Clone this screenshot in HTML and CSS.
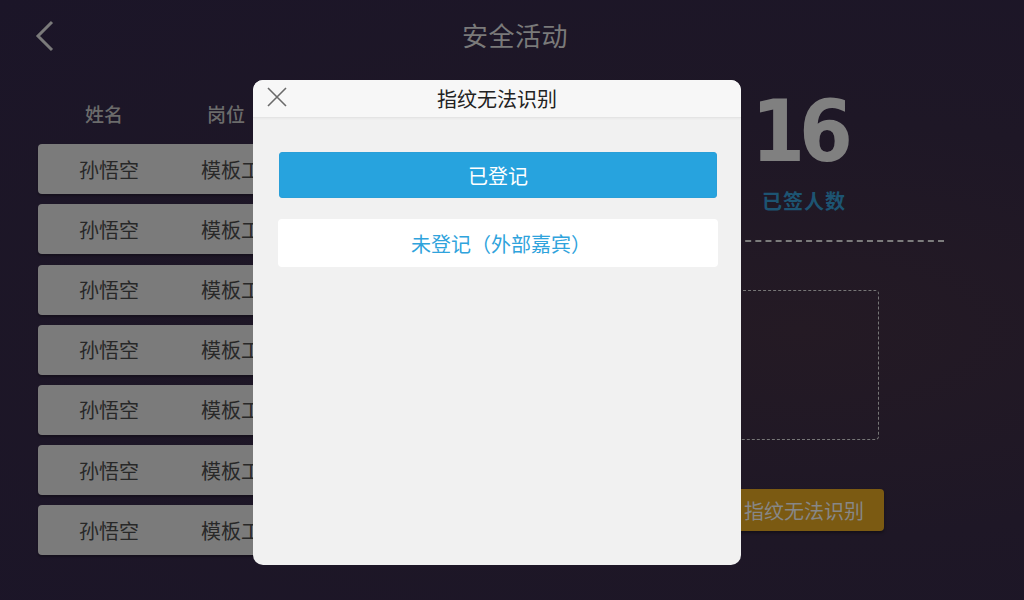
FILE: index.html
```html
<!DOCTYPE html>
<html lang="zh-CN">
<head>
<meta charset="utf-8">
<title>安全活动</title>
<link rel="stylesheet" href="styles.css">
</head>
<body>
<div class="page">
  <header class="topbar">
    <button class="back" aria-label="返回">
      <svg width="20" height="32" viewBox="0 0 20 32"><polyline points="17,2 3,16 17,30" fill="none" stroke="#7a7a7a" stroke-width="3"/></svg>
    </button>
    <h1 class="title">安全活动</h1>
  </header>
  <main class="main">
    <section class="list">
      <div class="list-head">
        <span class="cell">姓名</span>
        <span class="cell">岗位</span>
      </div>
      <div class="row"><span class="cell">孙悟空</span><span class="cell">模板工</span></div>
      <div class="row"><span class="cell">孙悟空</span><span class="cell">模板工</span></div>
      <div class="row"><span class="cell">孙悟空</span><span class="cell">模板工</span></div>
      <div class="row"><span class="cell">孙悟空</span><span class="cell">模板工</span></div>
      <div class="row"><span class="cell">孙悟空</span><span class="cell">模板工</span></div>
      <div class="row"><span class="cell">孙悟空</span><span class="cell">模板工</span></div>
      <div class="row"><span class="cell">孙悟空</span><span class="cell">模板工</span></div>
    </section>
    <aside class="side">
      <div class="count">16</div>
      <div class="count-label">已签人数</div>
      <div class="divider"></div>
      <div class="scan-box"></div>
      <button class="fail-btn">指纹无法识别</button>
    </aside>
  </main>

  <div class="modal">
    <div class="modal-head">
      <button class="close" aria-label="关闭">
        <svg width="20" height="20" viewBox="0 0 20 20"><path d="M1 1 L19 19 M19 1 L1 19" stroke="#6a6a6a" stroke-width="1.6" fill="none"/></svg>
      </button>
      <div class="modal-title">指纹无法识别</div>
    </div>
    <div class="modal-body">
      <button class="btn-primary">已登记</button>
      <button class="btn-plain">未登记（外部嘉宾）</button>
    </div>
  </div>
</div>
</body>
</html>
```

FILE: styles.css
```css
* { box-sizing: border-box; }
html, body { margin: 0; padding: 0; }
body {
  width: 1024px;
  height: 600px;
  overflow: hidden;
  font-family: "Noto Sans CJK SC", "Noto Sans", sans-serif;
}
.page {
  position: relative;
  width: 1024px;
  height: 600px;
  background: radial-gradient(ellipse at 78% 55%, #241a24 0%, #1e1726 45%, #1b1528 100%);
}
.topbar {
  position: relative;
  height: 72px;
  display: flex;
  align-items: center;
  justify-content: center;
}
.back {
  position: absolute;
  left: 35px;
  top: 20px;
  width: 20px;
  height: 32px;
  padding: 0;
  border: 0;
  background: none;
  display: flex;
}
.title {
  margin: 0 0 4px 6px;
  font-size: 26px;
  font-weight: 400;
  color: #7a7a7a;
  letter-spacing: 0.5px;
}
.main {
  display: flex;
  justify-content: space-between;
  padding: 0 80px 0 38px;
}
.list {
  width: 600px;
  display: flex;
  flex-direction: column;
  gap: 10.2px;
}
.list-head {
  display: flex;
  height: 72px;
  align-items: center;
  margin-bottom: -10px;
  padding-left: 5px;
  padding-top: 10px;
}
.list-head .cell {
  font-size: 19px;
  color: #6b6b6b;
  font-weight: 500;
}
.cell {
  width: 122px;
  text-align: center;
}
.row {
  height: 50px;
  background: #7b7b7b;
  border-radius: 4px;
  display: flex;
  align-items: center;
  padding-left: 10px;
  font-size: 20px;
  color: #282828;
  box-shadow: 0 2px 2px rgba(0,0,0,0.25);
}
.side {
  width: 280px;
  display: flex;
  flex-direction: column;
  align-items: center;
}
.count {
  font-family: "DejaVu Sans Condensed", "DejaVu Sans", sans-serif;
  font-stretch: condensed;
  font-weight: 700;
  font-size: 86px;
  line-height: 1;
  color: #808080;
  margin-top: 16px;
  letter-spacing: -6px;
  padding-right: 10px;
}
.count-label {
  font-size: 20px;
  font-weight: 700;
  color: #1d5472;
  margin-top: 12px;
  letter-spacing: 1px;
}
.divider {
  width: 280px;
  height: 0;
  border-top: 2px dashed #7c7c7c;
  margin-top: 25px;
}
.scan-box {
  width: 150px;
  height: 150px;
  border: 1px dashed #767676;
  border-radius: 4px;
  margin-top: 48px;
}
.fail-btn {
  margin-top: 49px;
  width: 160px;
  height: 42px;
  border: 0;
  border-radius: 4px;
  background: #7b5a12;
  color: #878787;
  font-family: "Noto Sans CJK SC", sans-serif;
  font-size: 20px;
  box-shadow: 0 2px 3px rgba(0,0,0,0.35);
}
.modal {
  position: absolute;
  left: 253px;
  top: 80px;
  width: 488px;
  height: 485px;
  background: #f1f1f1;
  border-radius: 10px;
  overflow: hidden;
}
.modal-head {
  position: relative;
  height: 38px;
  background: #f7f7f7;
  border-bottom: 1px solid #e4e4e4;
  box-shadow: 0 1px 2px rgba(0,0,0,0.04);
  display: flex;
  align-items: center;
  justify-content: center;
}
.close {
  position: absolute;
  left: 14px;
  top: 7px;
  width: 20px;
  height: 20px;
  padding: 0;
  border: 0;
  background: none;
  display: flex;
}
.modal-title {
  font-size: 20px;
  color: #222;
}
.modal-body {
  padding: 34px 23px 0 25px;
  display: flex;
  flex-direction: column;
  align-items: center;
  gap: 21px;
}
.btn-primary {
  width: 438px;
  height: 46px;
  border: 1px solid #2a9fd8;
  border-radius: 3px;
  background: #27a3de;
  color: #ffffff;
  font-family: "Noto Sans CJK SC", sans-serif;
  font-size: 20px;
}
.btn-plain {
  width: 440px;
  height: 48px;
  border: 0;
  border-radius: 4px;
  background: #ffffff;
  color: #2fa3dc;
  font-family: "Noto Sans CJK SC", sans-serif;
  font-size: 20px;
  padding-left: 12px;
}
```
